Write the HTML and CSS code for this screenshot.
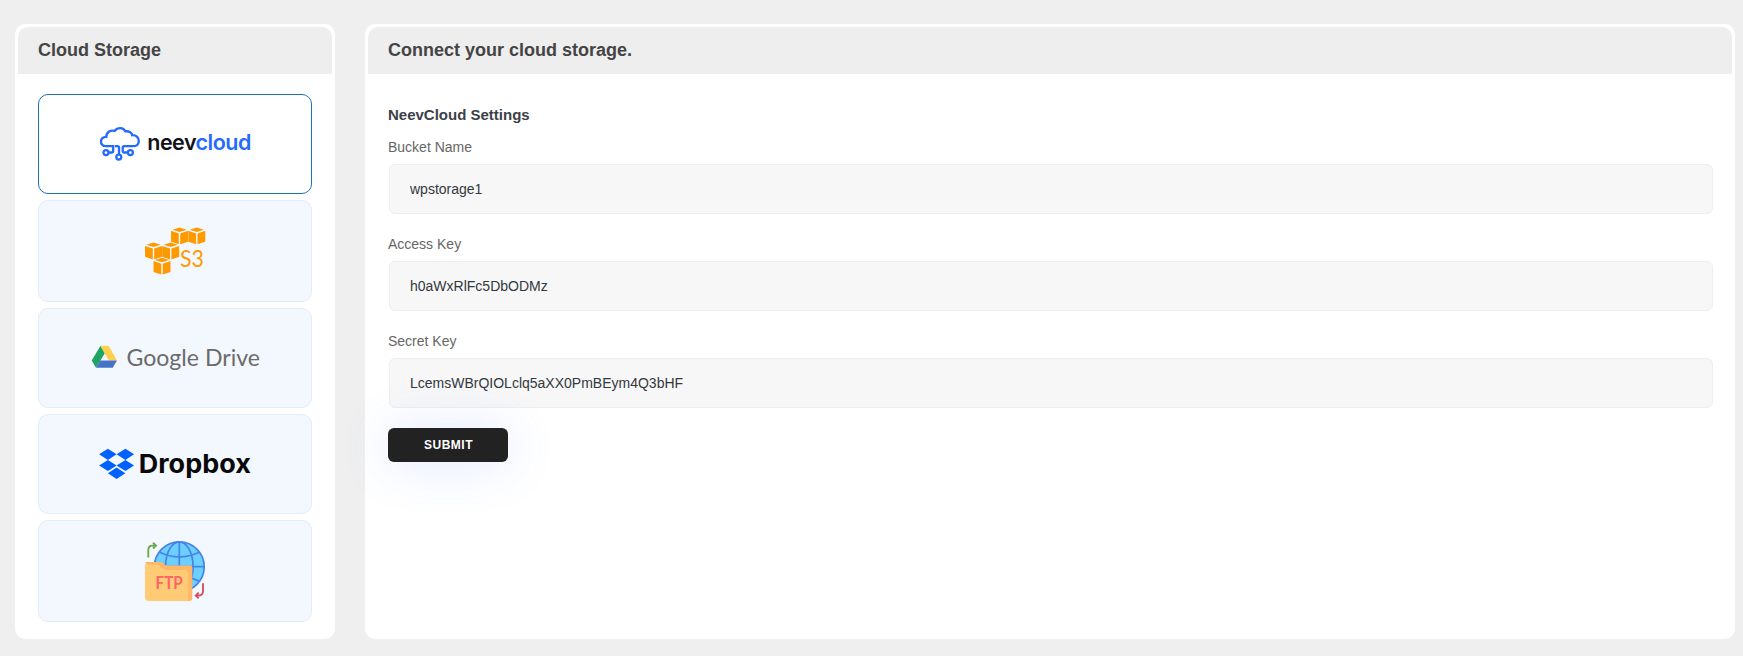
FILE: index.html
```html
<!DOCTYPE html>
<html lang="en">
<head>
<meta charset="utf-8">
<title>Cloud Storage</title>
<link rel="stylesheet" href="styles.css">
</head>
<body>
<main class="layout">
  <section class="panel">
    <h2 class="panel-title">Cloud Storage</h2>
    <div class="providers">
      <a class="provider active">
        <svg class="logo" width="180" height="60" viewBox="85 114 180 60">
          <g fill="none" stroke="#246bfd" stroke-width="2.300">
            <path d="M106 146.200C102.500 146.200 100.900 143.800 101 141.200C101.100 138.500 103.200 136.900 106.300 136.800C106.300 132.300 110 129.800 114.800 130.900C117.500 127 123.500 127.200 125.300 131.300C129.300 130.900 132 132.700 132.200 135.200C136.500 135 138.900 138 138.800 141.200C138.600 144.300 136.500 146.200 133 146.200H124.300Q122.700 146.200 122.700 147.800V151.300Q122.700 152.500 124 152.500H127.500M106 146.200H113.200V151.300Q113.200 152.500 112 152.500H108.800M115 146.200H117.600Q119 146.200 119 147.600V154.200"/>
            <circle cx="106" cy="152.600" r="2.500"/><circle cx="118.800" cy="157.100" r="2.500"/><circle cx="130.400" cy="152.600" r="2.500"/>
          </g>
          <text class="neev-text" x="147.300" y="149.500" textLength="104" lengthAdjust="spacing">neev<tspan fill="#246bfd">cloud</tspan></text>
        </svg>
      </a>
      <a class="provider tall">
        <svg class="logo" width="180" height="60" viewBox="85 221 180 60">
          <defs>
            <g id="cube" fill="#f90">
              <path d="M8.500 0L15.600 2.200L8.500 4.500L1.400 2.200Z"/>
              <path d="M0 3.300L7.800 5.900V16.800L0 14.200Z"/>
              <path d="M17 3.300L9.200 5.900V16.800L17 14.200Z"/>
            </g>
          </defs>
          <use href="#cube" x="171" y="227.500"/><use href="#cube" x="188.300" y="227.500"/>
          <use href="#cube" x="145" y="242.600"/><use href="#cube" x="162.200" y="242.600"/>
          <use href="#cube" x="153.500" y="257.800"/>
          <text class="s3-text" x="180" y="267" textLength="24" lengthAdjust="spacingAndGlyphs">S3</text>
        </svg>
      </a>
      <a class="provider">
        <svg class="logo" width="180" height="60" viewBox="85 328 180 60">
          <path fill="#1fa463" d="M100.500 345.700L104.800 353.200L96 367.700L91.700 360.500Z"/>
          <path fill="#ffd04b" d="M100.500 345.700H108.600L117 360.500H108.800Z"/>
          <path fill="#4673c6" d="M100.200 360.500H117L112.700 367.700H96Z"/>
          <text class="drive-text" x="126.500" y="365.500" textLength="133.500" lengthAdjust="spacingAndGlyphs">Google Drive</text>
        </svg>
      </a>
      <a class="provider">
        <svg class="logo" width="180" height="60" viewBox="85 434 180 60">
          <path fill="#0061ff" d="M107.900 448.700L116.600 454.300L107.900 459.900L99.100 454.300ZM125.400 448.700L134.100 454.300L125.400 459.900L116.600 454.300ZM107.900 459.900L116.600 465.500L107.900 471.100L99.100 465.500ZM125.400 459.900L134.100 465.500L125.400 471.100L116.600 465.500ZM116.600 467.600L125.300 473.200L116.600 478.900L107.900 473.200Z"/>
          <text class="dropbox-text" x="138.800" y="473.300" textLength="112" lengthAdjust="spacingAndGlyphs">Dropbox</text>
        </svg>
      </a>
      <a class="provider tall">
        <svg class="logo" width="180" height="80" viewBox="85 531 180 80">
          <circle cx="179.300" cy="566.700" r="24.900" fill="#6bd0ff"/>
          <g fill="none" stroke="#4783e6" stroke-width="1.700">
            <circle cx="179.300" cy="566.700" r="24.900"/>
            <ellipse cx="179.300" cy="566.700" rx="13.800" ry="24.900"/>
            <path d="M179.300 542V590M154.500 566.700H204M159.500 552.300Q179.300 561.500 199.100 552.300M159.500 581.100Q179.300 572 199.100 581.100"/>
          </g>
          <path fill="#ffb666" d="M145 561.900H160.300Q162.300 561.900 163.500 563.400Q165.200 565.600 167.500 565.600H190.300Q192.300 565.600 192.300 567.600V598Q192.300 601 189.300 601H170Z"/>
          <path fill="#ffcb75" d="M145 564.500H156Q159 564.500 161 566.800Q163.500 569.900 167 569.900H184.500Q188.300 569.900 188.300 573.500V598Q188.300 601 186 601H149Q145 601 145 597Z"/>
          <text class="ftp-text" x="155.600" y="589" textLength="27" lengthAdjust="spacingAndGlyphs">FTP</text>
          <path fill="none" stroke="#6fa84f" stroke-width="1.900" d="M148.300 557.500V550Q148.300 545.600 152.500 545.600H155.500M153 542.700L156 545.600L153 548.500"/>
          <path fill="none" stroke="#cf5361" stroke-width="1.900" d="M203 583.300V591Q203 595.500 199 595.500H196M198.700 592.600L195.700 595.500L198.700 598.400"/>
        </svg>
      </a>
    </div>
  </section>

  <section class="panel">
    <h2 class="panel-title">Connect your cloud storage.</h2>
    <form class="settings">
      <h3 class="settings-title">NeevCloud Settings</h3>
      <label class="field-label" for="bucket">Bucket Name</label>
      <input class="field" id="bucket" type="text" value="wpstorage1">
      <label class="field-label" for="access">Access Key</label>
      <input class="field" id="access" type="text" value="h0aWxRlFc5DbODMz">
      <label class="field-label" for="secret">Secret Key</label>
      <input class="field" id="secret" type="text" value="LcemsWBrQIOLclq5aXX0PmBEym4Q3bHF">
      <button class="submit" type="button">SUBMIT</button>
    </form>
  </section>
</main>
</body>
</html>
```
FILE: styles.css
```css
* { box-sizing: border-box; }
body {
  margin: 0;
  background: #efefef;
  font-family: "Liberation Sans", Arial, sans-serif;
}
.layout {
  display: grid;
  grid-template-columns: 320px 1370px;
  gap: 30px;
  height: 656px;
  padding: 24px 8px 17px 15px;
}
.panel {
  background: #fff;
  border: 3px solid #fff;
  border-radius: 10px;
}
.panel-title {
  height: 47px;
  margin: 0;
  padding-left: 20px;
  background: #eee;
  border-radius: 10px 10px 0 0;
  color: #444;
  font-size: 18px;
  line-height: 46px;
}
.providers {
  display: flex;
  flex-direction: column;
  gap: 6px;
  padding: 20px 20px 14px;
}
.provider {
  display: flex;
  align-items: center;
  justify-content: center;
  height: 100px;
  border: 1px solid #e2edfa;
  border-radius: 10px;
  background: #f3f8ff;
}
.provider.tall { height: 102px; }
.provider.active {
  border-color: #2271b1;
  background: #fff;
  box-shadow: 0 0 20px rgba(120, 20, 20, .018);
}
.logo { overflow: visible; }
.neev-text { font: 600 21.500px Inter, sans-serif; fill: #111318; }
.s3-text { font: 400 23.500px Lato, sans-serif; fill: #f90; }
.drive-text { font: 400 23.500px Lato, sans-serif; fill: #6b6b6b; }
.dropbox-text { font: 700 26px Inter, sans-serif; fill: #0a0a0a; }
.ftp-text { font: 700 16.500px Lato, sans-serif; fill: #ff6368; }
.settings {
  display: flex;
  flex-direction: column;
  align-items: flex-start;
  padding: 31px 19px 0 20px;
}
.settings-title {
  margin: 0;
  color: #3c4149;
  font-size: 15px;
  line-height: 20px;
}
.field-label {
  margin-top: 12px;
  color: #666;
  font-size: 14px;
  line-height: 20px;
}
.field {
  width: 1324px;
  height: 50px;
  margin: 7px 0 8px 1px;
  padding: 0 20px;
  border: 1px solid #eee;
  border-radius: 6px;
  background: #f7f7f7;
  color: #333840;
  font: 14px "Liberation Sans", Arial, sans-serif;
}
.submit {
  width: 120px;
  height: 34px;
  margin-top: 12px;
  padding: 0 0 0 1px;
  border: 0;
  border-radius: 6px;
  background: #222;
  color: #fff;
  font: bold 12px "Liberation Sans", Arial, sans-serif;
  letter-spacing: .5px;
  box-shadow: 0 2px 50px rgba(60, 110, 255, .17);
}
```
